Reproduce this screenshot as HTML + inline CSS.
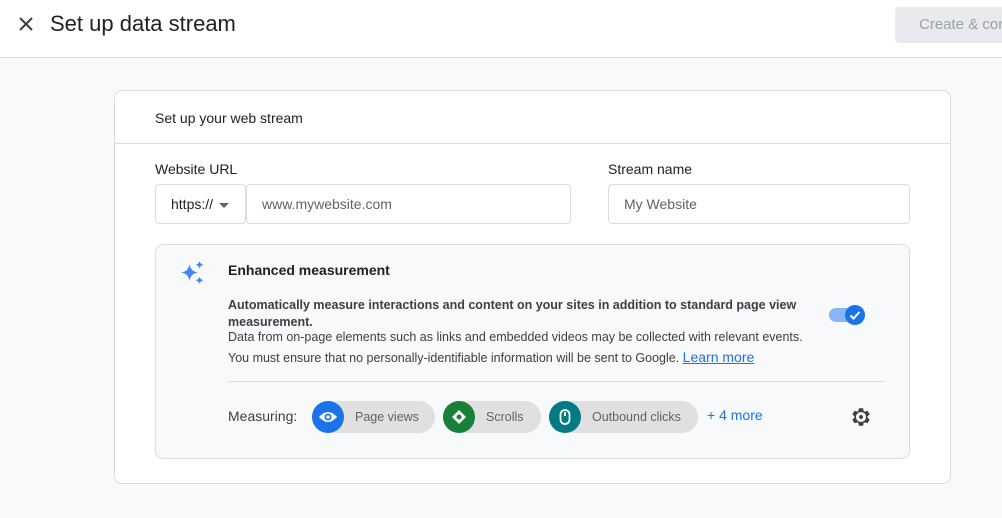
<!DOCTYPE html>
<html><head><style>
*{box-sizing:border-box;margin:0;padding:0}
body{width:1002px;height:518px;overflow:hidden;background:#f8f9fa;font-family:"Liberation Sans",Arial,sans-serif;color:#202124;position:relative}
.hdr{position:absolute;left:0;top:0;width:1002px;height:58px;background:#fff;border-bottom:1px solid #dadce0}
.abs{position:absolute}
.card{position:absolute;left:114px;top:90px;width:837px;height:394px;background:#fff;border:1px solid #dadce0;border-radius:8px}
.inp{position:absolute;height:40px;border:1px solid #dadce0;border-radius:4px;background:#fff;font-size:14px;color:#5f6368;line-height:38px;padding-left:15px}
.em{position:absolute;left:40px;top:153px;width:755px;height:215px;background:#f8f9fa;border:1px solid #dadce0;border-radius:8px}
.chip{position:absolute;top:156px;height:32px;border-radius:16px;background:#e0e0e0;font-size:12.5px;color:#5f6368;line-height:32px}
.chip .ic{position:absolute;left:0;top:0;width:32px;height:32px;border-radius:50%}
</style></head><body>
<div class="hdr">
 <svg class="abs" style="left:18px;top:16px" width="16" height="16" viewBox="0 0 16 16"><path d="M2 2L14 14M14 2L2 14" stroke="#3c4043" stroke-width="2"/></svg>
 <div class="abs" style="left:50px;top:11px;font-size:22px;color:#202124">Set up data stream</div>
 <div class="abs" style="left:895px;top:7px;width:120px;height:36px;background:#e8eaed;border-radius:4px;color:#9aa0a6;font-size:15px;line-height:36px;padding-left:24px;white-space:nowrap">Create &amp; continue</div>
</div>
<div class="card">
 <div class="abs" style="left:40px;top:19px;font-size:14px">Set up your web stream</div>
 <div class="abs" style="left:0;top:52px;width:835px;height:1px;background:#dadce0"></div>
 <div class="abs" style="left:40px;top:70px;font-size:14px">Website URL</div>
 <div class="abs" style="left:493px;top:70px;font-size:14px">Stream name</div>
 <div class="inp" style="left:40px;top:93px;width:91px;color:#202124">https:// <span style="display:inline-block;border:5px solid transparent;border-top-color:#5f6368;border-bottom:0;vertical-align:middle;margin-left:2px"></span></div>
 <div class="inp" style="left:131px;top:93px;width:325px">www.mywebsite.com</div>
 <div class="inp" style="left:493px;top:93px;width:302px">My Website</div>
 <div class="em">
  <svg class="abs" style="left:24px;top:15px" width="26" height="26" viewBox="0 0 26 26" fill="#4285f4"><path d="M9.5 4Q10.5 11.5 18 12.5Q10.5 13.5 9.5 21Q8.5 13.5 1 12.5Q8.5 11.5 9.5 4Z"/><path d="M19.5 1Q20 4 23.5 4.8Q20 5.6 19.5 8.6Q19 5.6 15.5 4.8Q19 4 19.5 1Z"/><path d="M19.5 16.5Q20 19.5 23.5 20.3Q20 21.1 19.5 24.1Q19 21.1 15.5 20.3Q19 19.5 19.5 16.5Z"/></svg>
  <div class="abs" style="left:72px;top:17px;font-size:14px;font-weight:bold;color:#202124">Enhanced measurement</div>
  <div class="abs" style="left:72px;top:52px;width:590px;font-size:12.5px;font-weight:bold;color:#3c4043;line-height:17px">Automatically measure interactions and content on your sites in addition to standard page view measurement.</div>
  <div class="abs" style="left:72px;top:85px;font-size:12.5px;color:#3c4043;white-space:nowrap">Data from on-page elements such as links and embedded videos may be collected with relevant events.</div>
  <div class="abs" style="left:72px;top:104px;font-size:12.5px;color:#3c4043;white-space:nowrap">You must ensure that no personally-identifiable information will be sent to Google. <a style="color:#1a73e8;text-decoration:underline;font-size:14px">Learn more</a></div>
  <div class="abs" style="left:673px;top:63px;width:30px;height:14px;border-radius:7px;background:#8ab4f8"></div>
  <div class="abs" style="left:689px;top:60px;width:20px;height:20px;border-radius:50%;background:#1a73e8"><svg width="20" height="20" viewBox="0 0 20 20"><path d="M5.5 10.5L8.5 13.5L14.5 7" stroke="#fff" stroke-width="2" fill="none"/></svg></div>
  <div class="abs" style="left:72px;top:136px;width:657px;height:1px;background:#dadce0"></div>
  <div class="abs" style="left:72px;top:163px;font-size:14px;color:#3c4043">Measuring:</div>
  <div class="chip" style="left:156px;width:123px"><div class="ic" style="background:#1a73e8"><svg width="32" height="32" viewBox="0 0 32 32"><path d="M7 16Q16 6 25 16Q16 26 7 16Z" fill="#fff"/><circle cx="16" cy="16" r="3.5" fill="#1a73e8"/><circle cx="16" cy="16" r="1.8" fill="#fff"/></svg></div><span style="position:absolute;left:43px">Page views</span></div>
  <div class="chip" style="left:287px;width:98px"><div class="ic" style="background:#188038"><svg width="32" height="32" viewBox="0 0 32 32"><path d="M16 9L23 16L16 23L9 16Z" fill="#fff"/><circle cx="16" cy="16" r="2.5" fill="#188038"/></svg></div><span style="position:absolute;left:43px">Scrolls</span></div>
  <div class="chip" style="left:393px;width:149px"><div class="ic" style="background:#007b83"><svg width="32" height="32" viewBox="0 0 32 32"><rect x="11.5" y="9" width="9" height="14" rx="4.5" fill="none" stroke="#fff" stroke-width="1.8"/><path d="M16 11V15" stroke="#fff" stroke-width="1.8"/></svg></div><span style="position:absolute;left:43px">Outbound clicks</span></div>
  <div class="abs" style="left:551px;top:162px;font-size:14px;color:#1a73e8">+ 4 more</div>
  <svg class="abs" style="left:694px;top:161px" width="22" height="22" viewBox="0 0 24 24"><path fill="#3c4043" fill-rule="evenodd" d="M19.14 12.94c.04-.3.06-.61.06-.94s-.02-.64-.07-.94l2.03-1.58a.49.49 0 0 0 .12-.61l-1.92-3.32a.49.49 0 0 0-.59-.22l-2.39.96c-.5-.38-1.03-.7-1.62-.94l-.36-2.540a.48.48 0 0 0-.48-.41h-3.84a.48.48 0 0 0-.47.41l-.36 2.54c-.59.24-1.130.57-1.62.94l-2.39-.96a.48.48 0 0 0-.59.22L2.74 8.87a.47.47 0 0 0 .12.61l2.03 1.58c-.05.3-.09.63-.09.94s.02.64.07.94l-2.03 1.58a.49.49 0 0 0-.12.61l1.92 3.32c.12.22.37.29.59.22l2.39-.96c.5.38 1.03.7 1.62.94l.36 2.54c.05.24.24.41.48.41h3.840c.24 0 .44-.17.47-.41l.36-2.54c.59-.24 1.13-.56 1.62-.94l2.39.96c.22.08.47 0 .59-.22l1.92-3.32a.47.47 0 0 0-.12-.61l-2.01-1.58zM12 17.5a5.5 5.5 0 1 1 0-11a5.5 5.5 0 0 1 0 11zM12 14a2 2 0 1 0 0-4a2 2 0 0 0 0 4z"/><circle cx="12" cy="12" r="2" fill="#3c4043"/></svg>
 </div>
</div>
</body></html>
